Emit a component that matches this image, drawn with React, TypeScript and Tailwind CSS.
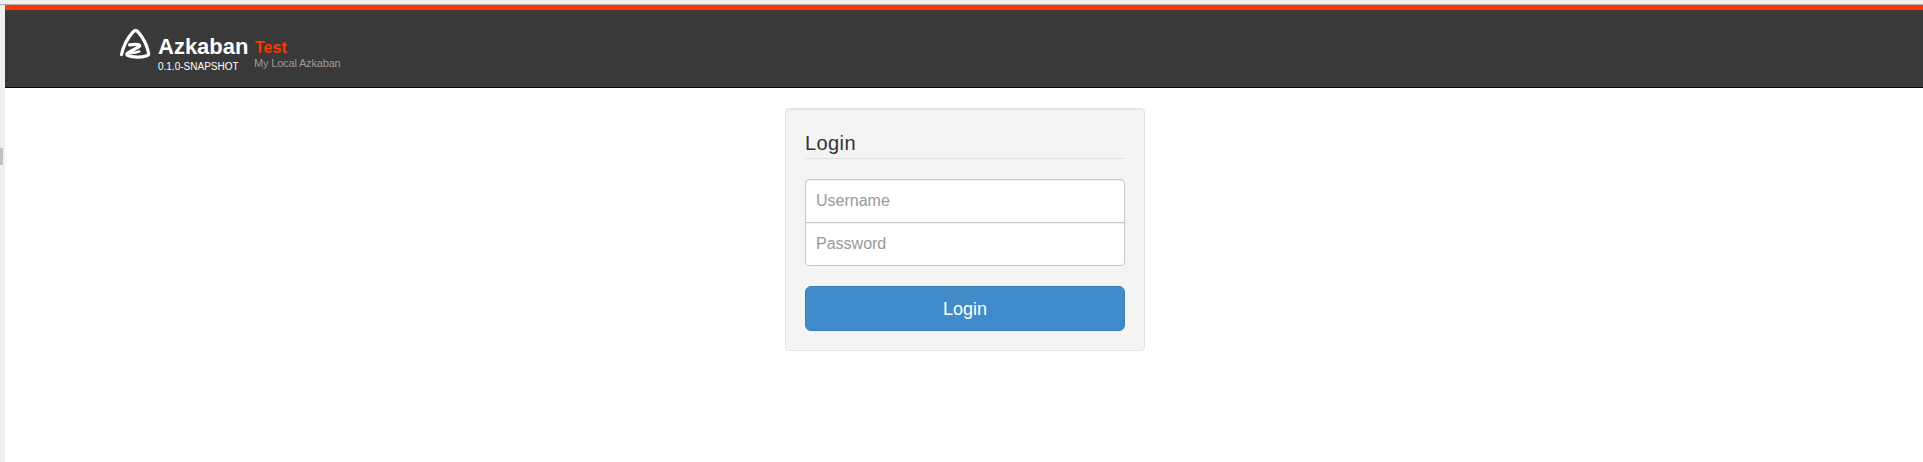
function Logo() {
  return (
    <svg viewBox="0 0 34 34" className="mt-[16px] h-[34px] w-[34px] shrink-0" fill="none" stroke="#fff" strokeLinecap="round" strokeLinejoin="round">
      <path
        d="M3.5 28.6 C4.6 22 9.5 11.5 15.3 5.6 Q17.6 3.4 19.8 5.6 C25 11.3 29 19.5 30.6 27 C30.9 28.6 30.2 29.3 28.8 29.7 C23.5 31.5 15 32 9.3 29.2 C8.2 28.4 8.8 27.8 9.6 27.2 L21.2 20.5 C22.4 19.5 21.4 18.8 20 18.6 C17 18.2 14.5 18.4 11.6 18.9"
        strokeWidth="3.2"
      />
      <path d="M21.2 20.3 L10.6 26.8 Q16.8 27.4 21.4 25.4" strokeWidth="2.4" />
    </svg>
  );
}

function Header() {
  return (
    <header className="flex h-[83px] border-b border-t-[5px] border-b-[#080808] border-t-[#ff3601] bg-[#393939] pl-[113px]">
      <Logo />
      <div className="ml-[6px] w-[96px]">
        <div className="mt-[22px] h-[30px] text-[22px] font-bold leading-[30px] text-white">Azkaban</div>
        <div className="-mt-[2px] text-[10px] leading-[14px] text-white">0.1.0-SNAPSHOT</div>
      </div>
      <div className="whitespace-nowrap">
        <div className="mt-[28px] pl-px text-[16px] font-bold leading-[20px] text-[#ff3601]">Test</div>
        <div className="-mt-px text-[11px] leading-[12px] tracking-[-0.17px] text-[#999]">My Local Azkaban</div>
      </div>
    </header>
  );
}

function LoginForm() {
  return (
    <form className="ml-[780px] mt-[20px] flex h-[243px] w-[360px] flex-col rounded-[4px] border border-[#e3e3e3] bg-[#f4f4f4] px-[19px] shadow-[inset_0_1px_1px_rgba(0,0,0,0.05)]">
      <h1 className="h-[50px] border-b border-[#e1e1e1] pt-[23px] text-[20px] leading-[22px] tracking-[0.4px] text-[#333]">Login</h1>
      <input
        type="text"
        placeholder="Username"
        className="mt-[20px] h-[44px] w-full rounded-t-[4px] border border-[#c8c8c8] bg-white px-[10px] text-[16px] shadow-[inset_0_1px_1px_rgba(0,0,0,0.075)] outline-none placeholder:text-[#999]"
      />
      <input
        type="password"
        placeholder="Password"
        className="-mt-px h-[44px] w-full rounded-b-[4px] border border-[#c8c8c8] bg-white px-[10px] text-[16px] shadow-[inset_0_1px_1px_rgba(0,0,0,0.075)] outline-none placeholder:text-[#999]"
      />
      <button
        type="button"
        className="mt-[20px] h-[45px] w-full rounded-[6px] border border-[#357ebd] bg-[#428bca] text-[18px] leading-[24px] text-white"
      >
        Login
      </button>
    </form>
  );
}

export default function App() {
  return (
    <div className="flex h-[462px] w-[1923px] flex-col overflow-hidden bg-white font-['Liberation_Sans',Arial,sans-serif]">
      <div className="h-[5px] shrink-0 border-b border-[#adadad] bg-[#f0f0f0]" />
      <div className="flex flex-1">
        <div className="w-[5px] shrink-0 bg-[#f0f0f0] pt-[143px]">
          <div className="h-[17px] w-[3px] bg-[#c1c1c1]" />
        </div>
        <main className="flex-1">
          <Header />
          <LoginForm />
        </main>
      </div>
    </div>
  );
}
